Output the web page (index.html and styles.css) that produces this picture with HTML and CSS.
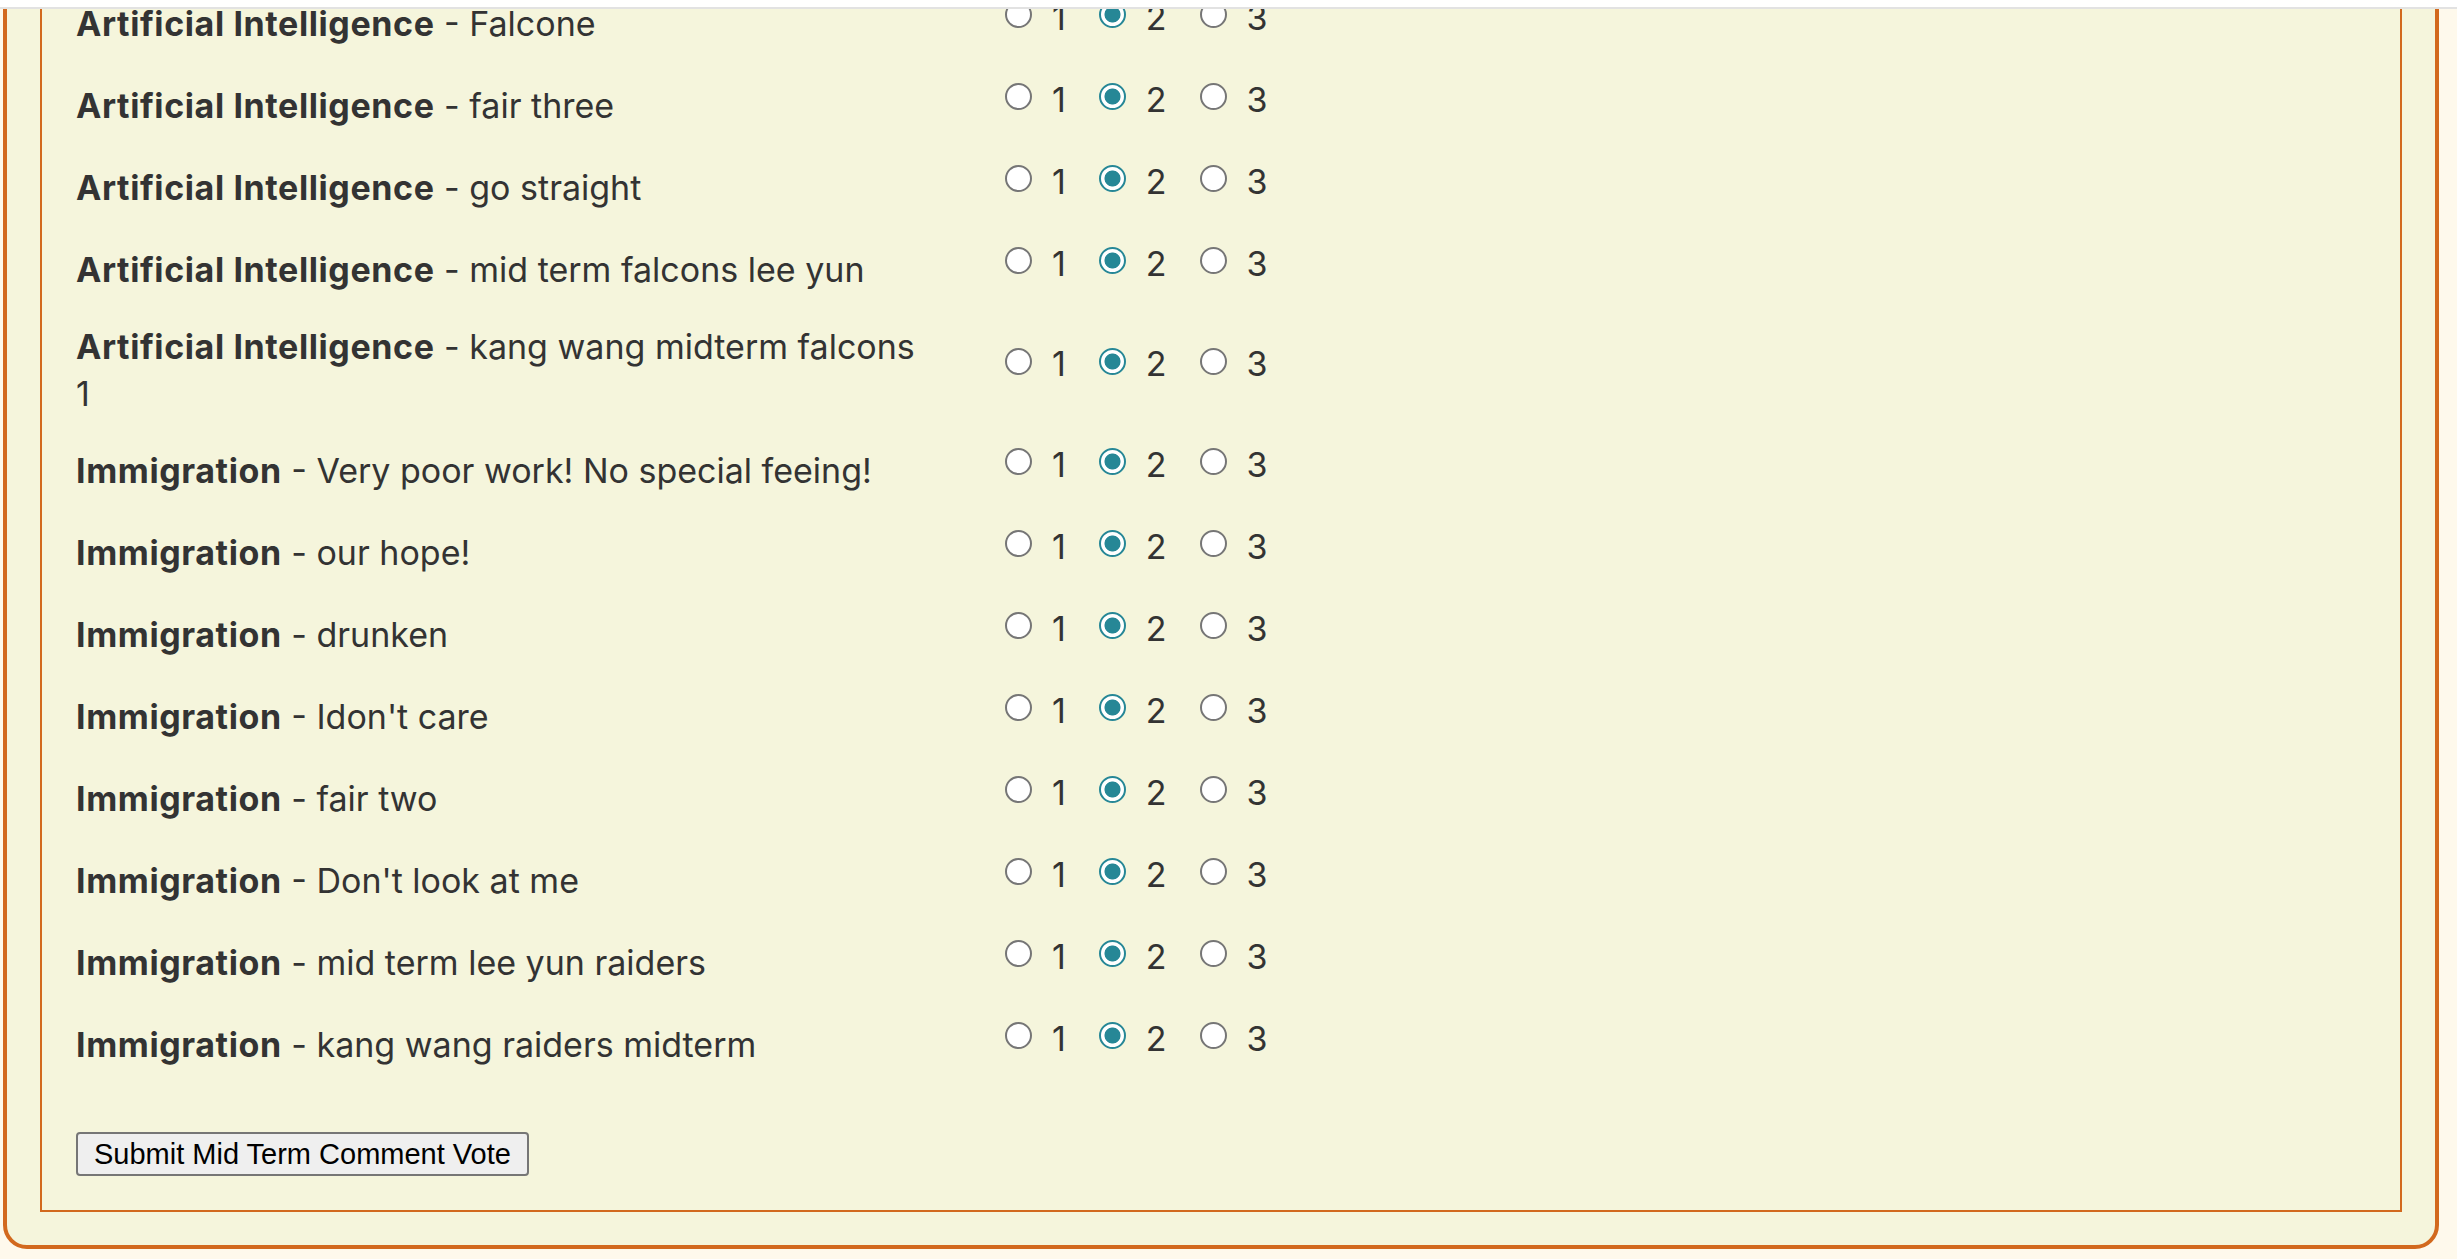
FILE: index.html
```html
<!DOCTYPE html>
<html lang="en">
<head>
<meta charset="utf-8">
<title>Mid Term Comment Vote</title>
<link rel="stylesheet" href="styles.css">
</head>
<body>
<div class="topbar"></div>
<div class="panel">
  <form class="vote">
    <div class="rows">
      <div class="row"><div class="desc"><b>Artificial Intelligence</b> - Falcone</div><div class="opts"><label class="opt"><input type="radio" name="c1" value="1"><span>1</span></label><label class="opt"><input type="radio" name="c1" value="2" checked><span>2</span></label><label class="opt"><input type="radio" name="c1" value="3"><span>3</span></label></div></div>
      <div class="row"><div class="desc"><b>Artificial Intelligence</b> - fair three</div><div class="opts"><label class="opt"><input type="radio" name="c2" value="1"><span>1</span></label><label class="opt"><input type="radio" name="c2" value="2" checked><span>2</span></label><label class="opt"><input type="radio" name="c2" value="3"><span>3</span></label></div></div>
      <div class="row"><div class="desc"><b>Artificial Intelligence</b> - go straight</div><div class="opts"><label class="opt"><input type="radio" name="c3" value="1"><span>1</span></label><label class="opt"><input type="radio" name="c3" value="2" checked><span>2</span></label><label class="opt"><input type="radio" name="c3" value="3"><span>3</span></label></div></div>
      <div class="row"><div class="desc"><b>Artificial Intelligence</b> - mid term falcons lee yun</div><div class="opts"><label class="opt"><input type="radio" name="c4" value="1"><span>1</span></label><label class="opt"><input type="radio" name="c4" value="2" checked><span>2</span></label><label class="opt"><input type="radio" name="c4" value="3"><span>3</span></label></div></div>
      <div class="row"><div class="desc"><b>Artificial Intelligence</b> - kang wang midterm falcons 1</div><div class="opts"><label class="opt"><input type="radio" name="c5" value="1"><span>1</span></label><label class="opt"><input type="radio" name="c5" value="2" checked><span>2</span></label><label class="opt"><input type="radio" name="c5" value="3"><span>3</span></label></div></div>
      <div class="row"><div class="desc"><b>Immigration</b> - Very poor work! No special feeing!</div><div class="opts"><label class="opt"><input type="radio" name="c6" value="1"><span>1</span></label><label class="opt"><input type="radio" name="c6" value="2" checked><span>2</span></label><label class="opt"><input type="radio" name="c6" value="3"><span>3</span></label></div></div>
      <div class="row"><div class="desc"><b>Immigration</b> - our hope!</div><div class="opts"><label class="opt"><input type="radio" name="c7" value="1"><span>1</span></label><label class="opt"><input type="radio" name="c7" value="2" checked><span>2</span></label><label class="opt"><input type="radio" name="c7" value="3"><span>3</span></label></div></div>
      <div class="row"><div class="desc"><b>Immigration</b> - drunken</div><div class="opts"><label class="opt"><input type="radio" name="c8" value="1"><span>1</span></label><label class="opt"><input type="radio" name="c8" value="2" checked><span>2</span></label><label class="opt"><input type="radio" name="c8" value="3"><span>3</span></label></div></div>
      <div class="row"><div class="desc"><b>Immigration</b> - Idon't care</div><div class="opts"><label class="opt"><input type="radio" name="c9" value="1"><span>1</span></label><label class="opt"><input type="radio" name="c9" value="2" checked><span>2</span></label><label class="opt"><input type="radio" name="c9" value="3"><span>3</span></label></div></div>
      <div class="row"><div class="desc"><b>Immigration</b> - fair two</div><div class="opts"><label class="opt"><input type="radio" name="c10" value="1"><span>1</span></label><label class="opt"><input type="radio" name="c10" value="2" checked><span>2</span></label><label class="opt"><input type="radio" name="c10" value="3"><span>3</span></label></div></div>
      <div class="row"><div class="desc"><b>Immigration</b> - Don't look at me</div><div class="opts"><label class="opt"><input type="radio" name="c11" value="1"><span>1</span></label><label class="opt"><input type="radio" name="c11" value="2" checked><span>2</span></label><label class="opt"><input type="radio" name="c11" value="3"><span>3</span></label></div></div>
      <div class="row"><div class="desc"><b>Immigration</b> - mid term lee yun raiders</div><div class="opts"><label class="opt"><input type="radio" name="c12" value="1"><span>1</span></label><label class="opt"><input type="radio" name="c12" value="2" checked><span>2</span></label><label class="opt"><input type="radio" name="c12" value="3"><span>3</span></label></div></div>
      <div class="row"><div class="desc"><b>Immigration</b> - kang wang raiders midterm</div><div class="opts"><label class="opt"><input type="radio" name="c13" value="1"><span>1</span></label><label class="opt"><input type="radio" name="c13" value="2" checked><span>2</span></label><label class="opt"><input type="radio" name="c13" value="3"><span>3</span></label></div></div>
    </div>
    <div class="actions"><button type="submit" class="submit">Submit Mid Term Comment Vote</button></div>
  </form>
</div>
</body>
</html>
```
FILE: styles.css
```css
html {
  overflow: hidden;
  background: #fef9ec;
}
body {
  margin: 0;
  font-family: "Comic Sans MS", Inter, sans-serif;
  font-size: 34px;
  color: #333333;
}
.topbar {
  position: fixed;
  top: 0;
  left: 0;
  right: 0;
  height: 7px;
  background: #ffffff;
  border-bottom: 2px solid #e2e2e2;
  z-index: 10;
}
.panel {
  margin: -94px 18px 10px 3px;
  border: 4px solid #d2691e;
  border-radius: 24px;
  padding: 33px;
  background: #f5f5dc;
}
.vote {
  margin: 0;
  border: 2px solid #d2691e;
  padding: 34px;
}
.rows {
  display: flex;
  flex-direction: column;
}
.row {
  display: flex;
  align-items: center;
  min-height: 82px;
}
.desc {
  width: 852px;
  flex: none;
  line-height: 47px;
  padding: 16px 0 9px;
}
.desc b {
  font-weight: 700;
  letter-spacing: 0.6px;
}
.opts {
  display: flex;
  align-items: center;
  height: 82px;
  padding-bottom: 11px;
  box-sizing: border-box;
  margin-left: 77px;
}
.opt {
  display: inline-flex;
  align-items: center;
  margin-right: 33px;
}
.opt input {
  appearance: none;
  -webkit-appearance: none;
  box-sizing: border-box;
  width: 27px;
  height: 27px;
  margin: 0;
  border: 2px solid #767676;
  border-radius: 50%;
  background: #ffffff;
}
.opt input:checked {
  border: 2.5px solid #268796;
  background: radial-gradient(circle at center, #268796 0 7.6px, #ffffff 8.4px);
}
.opt span {
  line-height: 47px;
  margin-left: 20px;
  margin-top: 5px;
}
.actions {
  display: flex;
  margin-top: 50px;
}
.submit {
  font-family: "Liberation Sans", Arial, sans-serif;
  font-size: 29px;
  color: #000000;
  height: 44px;
  padding: 0 16px;
  border: 2px solid #767676;
  border-radius: 4px;
  background: #efefef;
}
```
